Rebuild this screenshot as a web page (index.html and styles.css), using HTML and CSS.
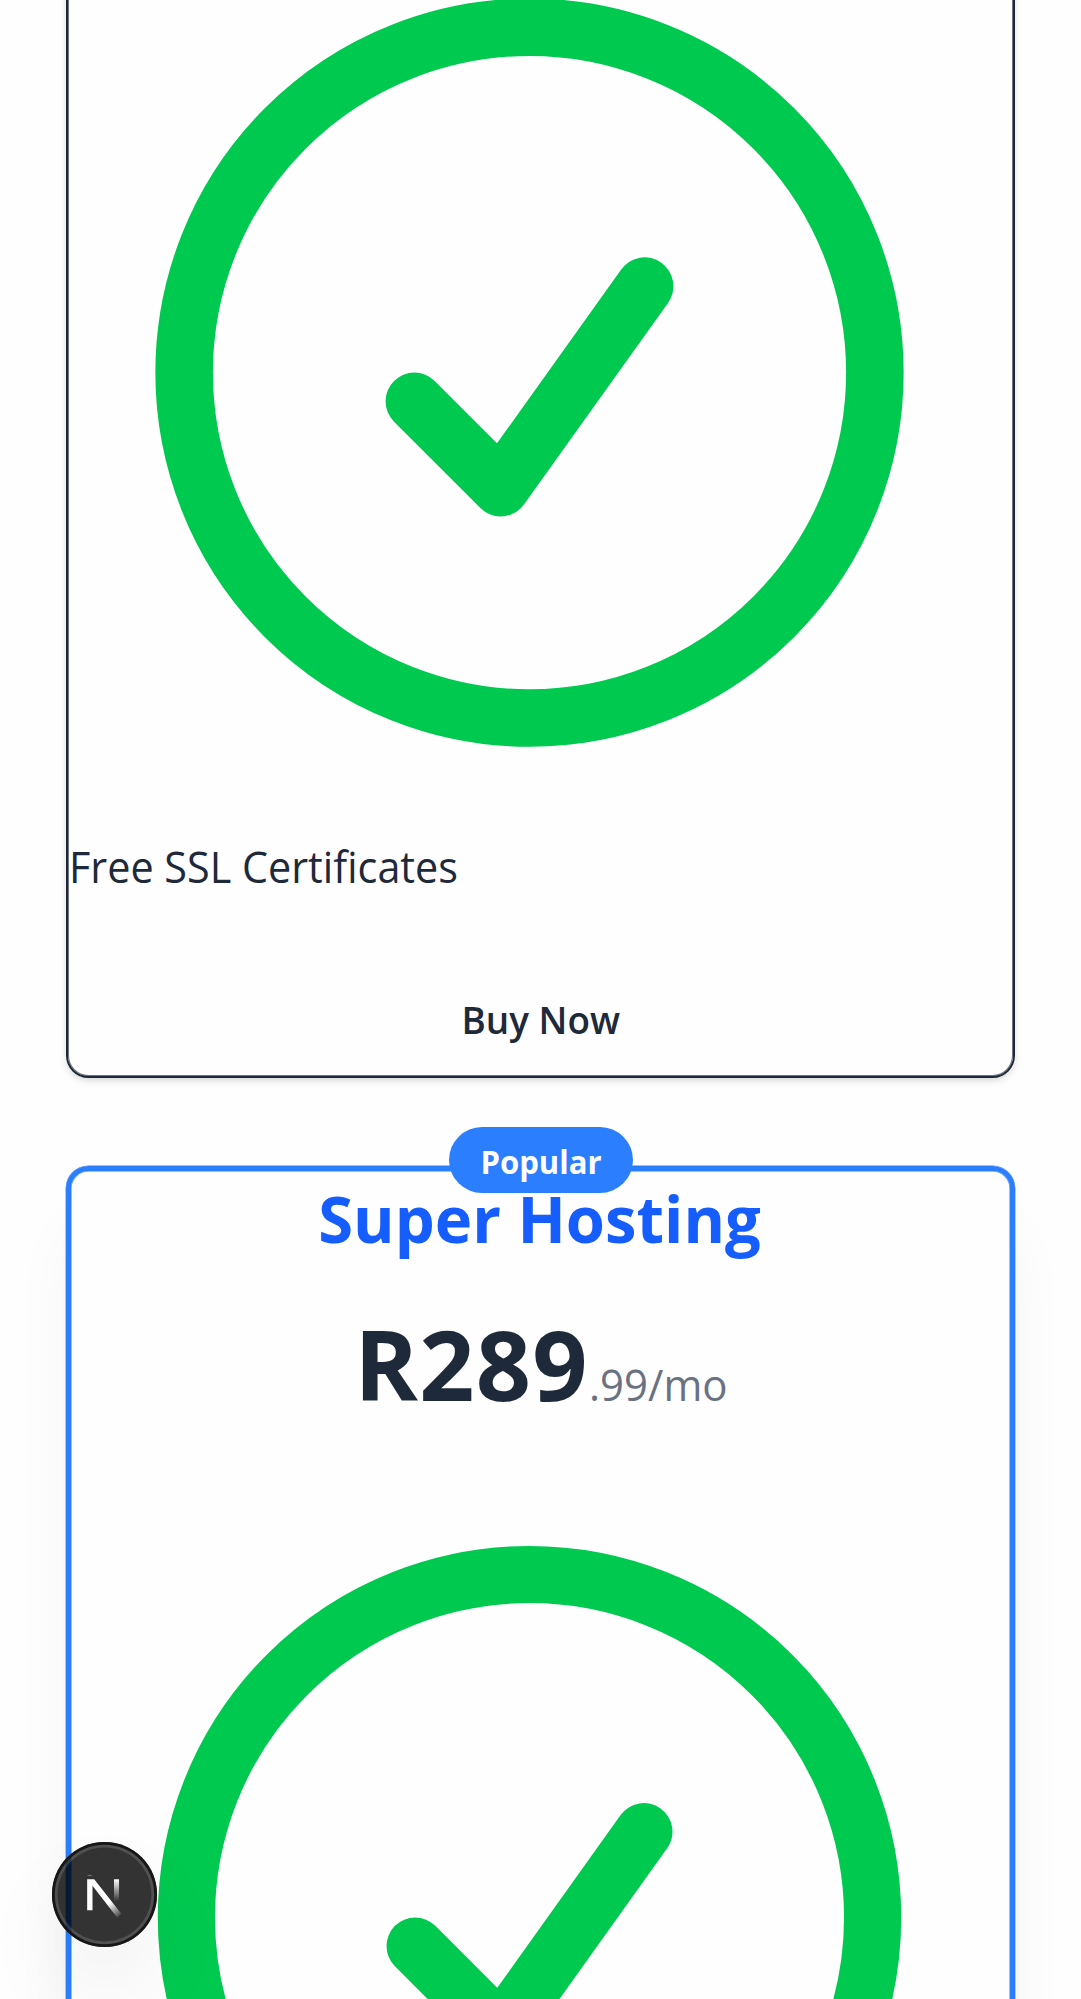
FILE: index.html
```html
<!DOCTYPE html>
<html lang="en">
<head>
<meta charset="utf-8">
<title>Hosting Plans</title>
<link rel="stylesheet" href="styles.css">
</head>
<body>
<main class="plans">
  <section class="card card-basic">
    <svg class="check" viewBox="0 0 24 24"><path d="M9 12.75 11.25 15 15 9.75M21 12a9 9 0 1 1-18 0 9 9 0 0 1 18 0Z"/></svg>
    <p class="feature">Free SSL Certificates</p>
    <button class="buy" type="button">Buy Now</button>
  </section>
  <section class="card card-popular">
    <span class="pill"><span class="pill-text">Popular</span></span>
    <h2 class="name">Super Hosting</h2>
    <p class="price"><span class="amount">R289</span><span class="period">.99/mo</span></p>
    <svg class="check" viewBox="0 0 24 24"><path d="M9 12.75 11.25 15 15 9.75M21 12a9 9 0 1 1-18 0 9 9 0 0 1 18 0Z"/></svg>
  </section>
</main>
<div class="dev-badge">
  <svg viewBox="0 0 104 104">
    <defs>
      <linearGradient id="diagonal" gradientUnits="userSpaceOnUse" x1="56" y1="62" x2="67" y2="76"><stop stop-color="#fff"/><stop offset="1" stop-color="#fff" stop-opacity="0"/></linearGradient>
      <linearGradient id="stem" gradientUnits="userSpaceOnUse" x1="0" y1="37" x2="0" y2="59"><stop stop-color="#fff"/><stop offset="1" stop-color="#fff" stop-opacity="0"/></linearGradient>
    </defs>
    <path d="M35 37h7L69 71.500l-4 4L40.300 43.500V68H35z" fill="url(#diagonal)"/>
    <path d="M61.700 37h5v23h-5z" fill="url(#stem)"/>
    <path d="M35.500 33.300h4" stroke="#888" stroke-width=".8"/>
  </svg>
</div>
</body>
</html>
```
FILE: styles.css
```css
* { box-sizing: border-box; }
html, body { height: 1999px; overflow: hidden; }
body {
  margin: 0;
  background: #fefefe;
  color: #1e2939;
  font-family: "Open Sans", "Noto Sans", sans-serif;
}
p, h2 { margin: 0; white-space: nowrap; }
.plans {
  display: flex;
  flex-direction: column;
  gap: 88px;
  height: 1999px;
  padding: 0 66px;
  overflow: hidden;
}
.card {
  display: flex;
  flex-direction: column;
  flex-shrink: 0;
  border-radius: 22.4px;
}
.card-basic {
  height: 1177.500px;
  margin-top: -100px;
  padding-top: 10px;
  border: 2px solid #1e2939;
  box-shadow: inset 0 0 0 1px rgba(30, 41, 57, .65), 0 3px 8px rgba(0, 0, 0, .1), 0 3px 6px -3px rgba(0, 0, 0, .1);
}
.check {
  display: block;
  flex-shrink: 0;
  width: 921px;
  height: 921px;
  margin-left: 1px;
  fill: none;
  stroke: #00c950;
  stroke-width: 1.5;
  stroke-linecap: round;
  stroke-linejoin: round;
}
.feature {
  height: 67px;
  margin: 0 0 0 1px;
  font-size: 43.500px;
  line-height: 68px;
  transform: scaleX(.95);
  transform-origin: left;
}
.buy {
  align-self: center;
  height: 112px;
  margin-top: 64px;
  padding: 0;
  border: 0;
  background: none;
  color: inherit;
  font: 600 38.500px/111px "Open Sans", "Noto Sans", sans-serif;
  transform: scaleX(.957);
}
.card-popular {
  position: relative;
  height: 1400px;
  margin-top: .5px;
  border: 5px solid #2b7fff;
  box-shadow: 0 0 0 .4px #2b7fff, inset 0 0 0 .5px #2b7fff, 0 56px 70px -14px rgba(0, 0, 0, .065), 0 22px 28px -17px rgba(0, 0, 0, .06);
}
.pill {
  position: absolute;
  top: -44px;
  left: 377.700px;
  width: 184px;
  height: 66px;
  border-radius: 33px;
  background: #2b7fff;
  color: #fff;
  font-size: 33px;
  font-weight: 700;
  line-height: 69px;
  text-align: center;
}
.pill-text { display: block; transform: scaleX(.94); }
.name {
  height: 90px;
  margin-top: 1px;
  color: #155dfc;
  font-size: 65.300px;
  font-weight: 700;
  line-height: 92px;
  text-align: center;
  transform: translateX(-1px) scaleX(.97);
}
.price {
  display: flex;
  justify-content: center;
  align-items: baseline;
  height: 112px;
  margin-top: 43px;
  line-height: 117px;
}
.amount {
  margin-left: 6px;
  font-size: 96.600px;
  font-weight: 700;
  letter-spacing: 1.300px;
}
.period {
  margin-left: .5px;
  color: #6a7282;
  font-size: 43.500px;
  transform: scaleX(.965);
  transform-origin: left;
}
.card-popular .check {
  width: 915px;
  height: 915px;
  margin: 43px 0 0 1px;
}
.dev-badge {
  position: fixed;
  top: 1842px;
  left: 52px;
  width: 104.500px;
  height: 104.500px;
  border-radius: 50%;
  background: rgba(0, 0, 0, .8);
  box-shadow: inset 0 0 0 2.800px #171717, inset 0 0 0 5.600px rgba(255, 255, 255, .14), 0 45px 90px -5px rgba(0, 0, 0, .07);
}
.dev-badge svg { display: block; }
```
